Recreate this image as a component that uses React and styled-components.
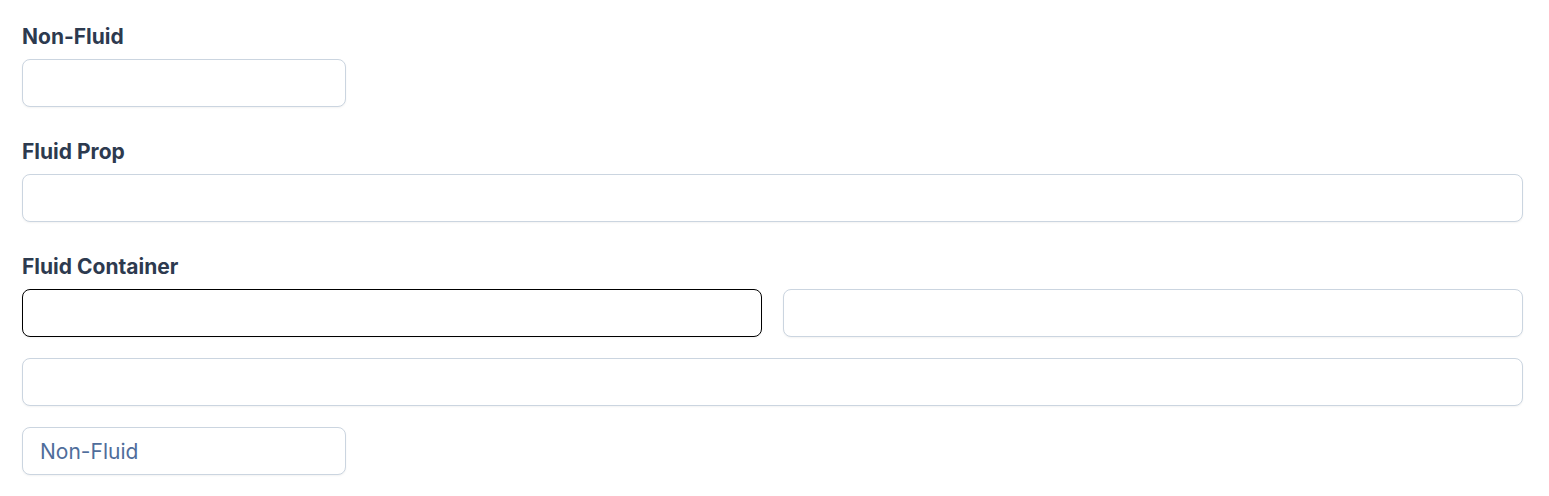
import React from "react";
import styled, { createGlobalStyle } from "styled-components";

const Global = createGlobalStyle`
  html, body { margin: 0; padding: 0; background: #ffffff; }
  body { font-family: Inter, "Noto Sans", sans-serif; }
  * { box-sizing: border-box; }
`;

const Page = styled.div`
  padding: 22px 26px 0 22px;
  display: flex;
  flex-direction: column;
`;

const Section = styled.section`
  display: flex;
  flex-direction: column;
  margin-bottom: 30px;
`;

const Label = styled.label`
  font-size: 21px;
  line-height: 28px;
  font-weight: 700;
  color: #2d3a4f;
  margin-top: 1px;
  margin-bottom: 8px;
`;

const Stack = styled.div`
  display: flex;
  flex-direction: column;
  gap: 21px;
`;

const Row = styled.div`
  display: grid;
  grid-template-columns: 1fr 1fr;
  gap: 21px;
`;

const Input = styled.input`
  display: block;
  width: ${(p) => (p.$fluid ? "100%" : "324px")};
  height: 48px;
  padding: 0 17px;
  border: 1px solid ${(p) => (p.$focused ? "#000000" : "#cbd5e0")};
  border-radius: 8px;
  background: #fff;
  box-shadow: 0 1px 2px rgba(0, 0, 0, 0.05);
  font-family: Inter, "Noto Sans", sans-serif;
  font-size: 21px;
  color: #2d3748;
  outline: none;
  &::placeholder { color: #4f6d9b; opacity: 1; }
`;

export default function App() {
  return (
    <>
      <Global />
      <Page>
        <Section>
          <Label>Non-Fluid</Label>
          <Input />
        </Section>
        <Section>
          <Label>Fluid Prop</Label>
          <Input $fluid />
        </Section>
        <Section>
          <Label>Fluid Container</Label>
          <Stack>
            <Row>
              <Input $fluid $focused />
              <Input $fluid />
            </Row>
            <Input $fluid />
            <Input placeholder="Non-Fluid" />
          </Stack>
        </Section>
      </Page>
    </>
  );
}
